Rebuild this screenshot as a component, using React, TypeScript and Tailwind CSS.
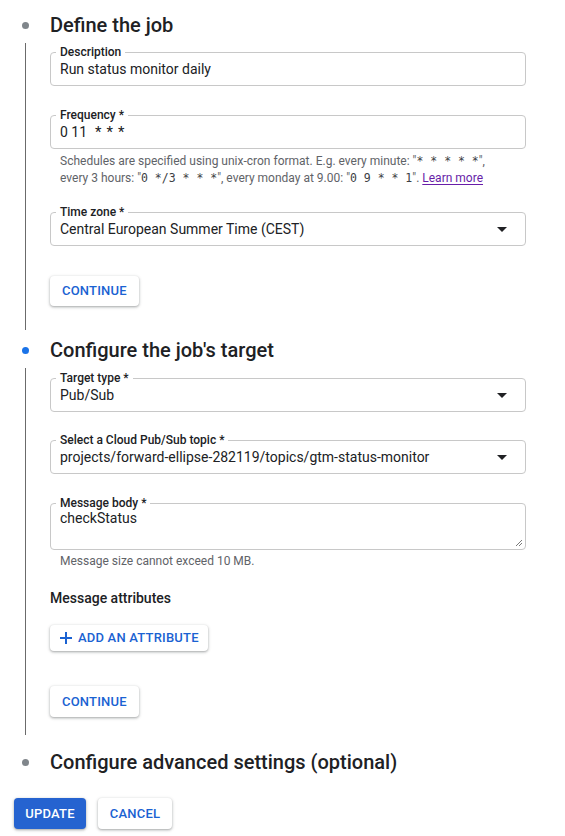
import React from "react";

const font = { fontFamily: "Roboto, 'Noto Sans', Arial, sans-serif" };

function Arrow() {
  return (
    <svg width="10" height="5" viewBox="0 0 10 5" className="mr-[9px] shrink-0">
      <path d="M0 0 L10 0 L5 5 Z" fill="#202124" />
    </svg>
  );
}

function Field({
  label,
  value,
  select,
  className = "",
}: {
  label: string;
  value: React.ReactNode;
  select?: boolean;
  className?: string;
}) {
  return (
    <fieldset className={`border border-[#c8c8c8] rounded-[4px] px-[9px] pb-[6px] ${className}`}>
      <legend className="-ml-[4px] px-[4px] text-[12px] leading-[14px] font-medium text-[#202124]">{label}</legend>
      <div className="flex items-center justify-between h-[20px]">
        <span className="text-[14px] leading-[20px] text-[#202124] whitespace-nowrap">{value}</span>
        {select && <Arrow />}
      </div>
    </fieldset>
  );
}

const mono = "font-['DejaVu_Sans_Mono',monospace] text-[11.5px] text-[#3c4043]";

function Btn({ children, className = "" }: { children: React.ReactNode; className?: string }) {
  return (
    <button
      className={`flex items-center bg-white rounded-[4px] text-[13px] font-medium text-[#1a62d2] tracking-[0.2px] shadow-[0_1px_2px_0_rgba(60,64,67,0.3),0_1px_3px_1px_rgba(60,64,67,0.15)] ${className}`}
    >
      {children}
    </button>
  );
}

function StepHeader({ title, active }: { title: string; active?: boolean }) {
  return (
    <div className="flex items-center h-[28px]">
      <div className="w-[50px] flex justify-center">
        <div className={`w-[7px] h-[7px] rounded-full ${active ? "bg-[#1a73e8]" : "bg-[#80868b]"}`} />
      </div>
      <h2 className="text-[20px] leading-[28px] font-medium text-[#202124]">{title}</h2>
    </div>
  );
}

export default function App() {
  return (
    <div style={font} className="w-[565px] h-[836px] bg-white overflow-hidden pt-[11px]">
      <StepHeader title="Define the job" />
      <div className="mt-[4px] ml-[25px] border-l border-[#6b6b6b] pl-[24px] pr-[39px] pt-[2px] pb-[24px]">
        <Field label="Description" value="Run status monitor daily" />
        <Field
          label="Frequency *"
          value={
            <>
              0 11
              <span className="ml-[8px] text-[15px]">*</span>
              <span className="ml-[5px] text-[15px]">*</span>
              <span className="ml-[5px] text-[15px]">*</span>
            </>
          }
          className="mt-[22px]"
        />
        <div className="mt-[4px] pl-[10px] text-[12px] leading-[17px] text-[#5f6368] whitespace-nowrap">
          Schedules are specified using unix-cron format. E.g. every minute: "
          <span className={mono}>*&nbsp;*&nbsp;*&nbsp;*&nbsp;*</span>",
          <br />
          every 3 hours: "<span className={mono}>0&nbsp;*/3&nbsp;*&nbsp;*&nbsp;*</span>", every monday at 9.00: "
          <span className={mono}>0&nbsp;9&nbsp;*&nbsp;*&nbsp;1</span>".{" "}
          <a className="text-[#681da8] underline underline-offset-2">Learn more</a>
        </div>
        <Field label="Time zone *" value="Central European Summer Time (CEST)" select className="mt-[18px]" />
        <Btn className="mt-[30px] h-[30px] px-[12px]">CONTINUE</Btn>
      </div>

      <div className="mt-[6px]">
        <StepHeader title="Configure the job's target" active />
      </div>
      <div className="mt-[4px] ml-[25px] border-l border-[#6b6b6b] pl-[24px] pr-[39px] pt-[3px] pb-[18px]">
        <Field label="Target type *" value="Pub/Sub" select />
        <Field
          label="Select a Cloud Pub/Sub topic *"
          value="projects/forward-ellipse-282119/topics/gtm-status-monitor"
          select
          className="mt-[21px]"
        />
        <fieldset className="relative mt-[22px] border border-[#c8c8c8] rounded-[4px] px-[9px] pb-[6px]">
          <legend className="-ml-[4px] px-[4px] text-[12px] leading-[14px] font-medium text-[#202124]">
            Message body *
          </legend>
          <div className="h-[33px] text-[14px] leading-[16px] text-[#202124]">checkStatus</div>
          <svg width="8" height="8" viewBox="0 0 8 8" className="absolute right-[2px] bottom-[2px]">
            <path d="M7 1 L1 7 M7 4 L4 7" stroke="#7a7a7a" strokeWidth="1" />
          </svg>
        </fieldset>
        <div className="mt-[3px] pl-[10px] text-[12px] leading-[17px] text-[#5f6368]">
          Message size cannot exceed 10 MB.
        </div>
        <div className="mt-[18px] text-[14px] leading-[20px] font-medium text-[#202124]">Message attributes</div>
        <Btn className="mt-[17px] h-[26px] pl-[10px] pr-[9px] gap-[6px]">
          <svg width="12" height="12" viewBox="0 0 12 12">
            <path d="M6 0 V12 M0 6 H12" stroke="#1a62d2" strokeWidth="2" />
          </svg>
          ADD AN ATTRIBUTE
        </Btn>
        <Btn className="mt-[35px] h-[31px] px-[12px]">CONTINUE</Btn>
      </div>

      <div className="mt-[13px]">
        <StepHeader title="Configure advanced settings (optional)" />
      </div>

      <div className="mt-[22px] pl-[14px] flex gap-[12px]">
        <button className="h-[31px] w-[72px] rounded-[4px] bg-[#2563d0] text-white text-[13px] font-medium tracking-[0.2px] shadow-[0_1px_2px_0_rgba(60,64,67,0.3),0_1px_3px_1px_rgba(60,64,67,0.15)]">
          UPDATE
        </button>
        <Btn className="h-[31px] w-[74px] justify-center">CANCEL</Btn>
      </div>
    </div>
  );
}
